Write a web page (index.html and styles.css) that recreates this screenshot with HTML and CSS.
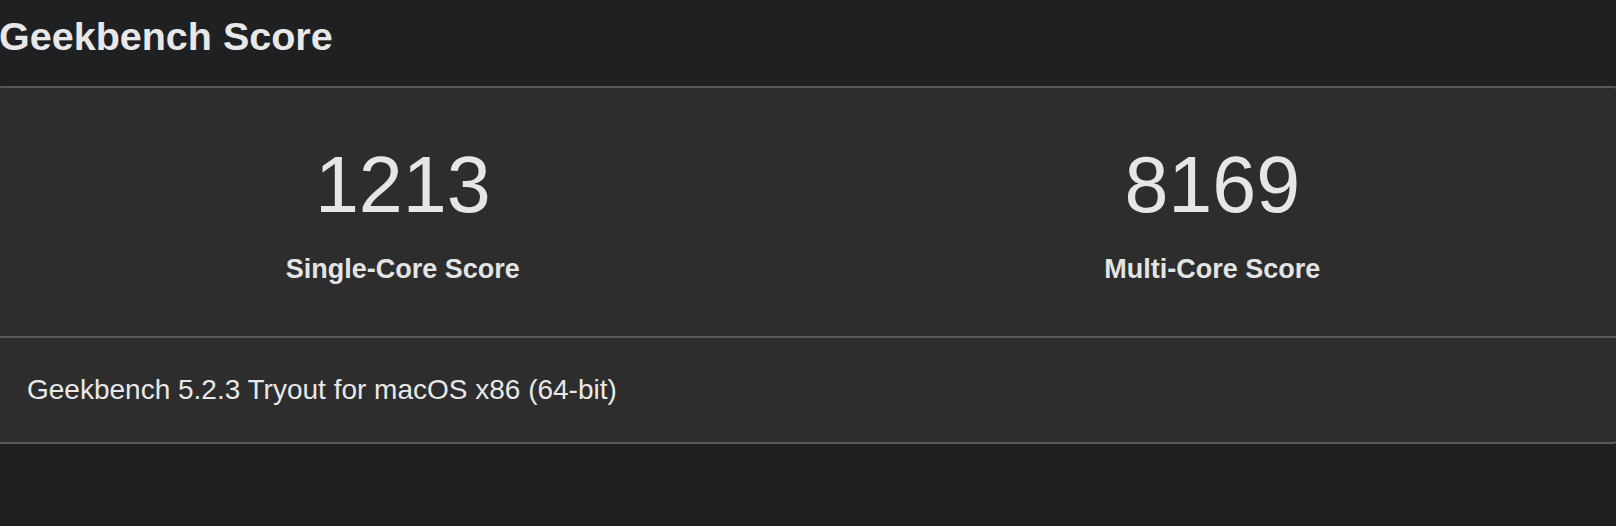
FILE: index.html
```html
<!DOCTYPE html>
<html lang="en">
  <head>
    <meta charset="UTF-8" />
    <meta name="viewport" content="width=device-width, initial-scale=1.0" />
    <title>Geekbench Score</title>
    <link rel="stylesheet" href="styles.css">
  </head>
  <body>
    <div class="page">
      <h1 class="title">Geekbench Score</h1>

      <div class="score-card">
        <div class="scores">
          <div class="score">
            <div class="score-value">1213</div>
            <div class="score-label">Single-Core Score</div>
          </div>
          <div class="score">
            <div class="score-value">8169</div>
            <div class="score-label">Multi-Core Score</div>
          </div>
        </div>
        <div class="score-footer">Geekbench 5.2.3 Tryout for macOS x86 (64-bit)</div>
      </div>
    </div>
  </body>
</html>
```

FILE: styles.css
```css
* {
  margin: 0;
  padding: 0;
  box-sizing: border-box;
}

body {
  font-family: "Liberation Sans", Arial, sans-serif;
  background: #1f2022;
  color: #e6e6e6;
  overflow: hidden;
}

.page {
  padding-top: 16px;
}

.title {
  font-size: 39.5px;
  line-height: 40px;
  font-weight: 700;
  color: #e8e8e8;
  margin-left: -1px;
}

/* card runs slightly past both edges of the window */
.score-card {
  margin-top: 30px;
  margin-left: -4px;
  width: 1623px;
  background: #2d2d2d;
  border: 2px solid #595959;
  border-radius: 6px;
}

.scores {
  display: grid;
  grid-template-columns: 1fr 1fr;
  border-bottom: 2px solid #595959;
}

.score {
  text-align: center;
  padding: 57px 0 53px;
}

.score-value {
  font-size: 79px;
  line-height: 79px;
  color: #e6e6e6;
}

.score-label {
  margin-top: 32px;
  font-size: 27px;
  line-height: 27px;
  font-weight: 700;
  color: #e4e4e4;
}

.score-footer {
  padding: 38px 29px;
  font-size: 28px;
  line-height: 28px;
  color: #e8e8e8;
}
```
